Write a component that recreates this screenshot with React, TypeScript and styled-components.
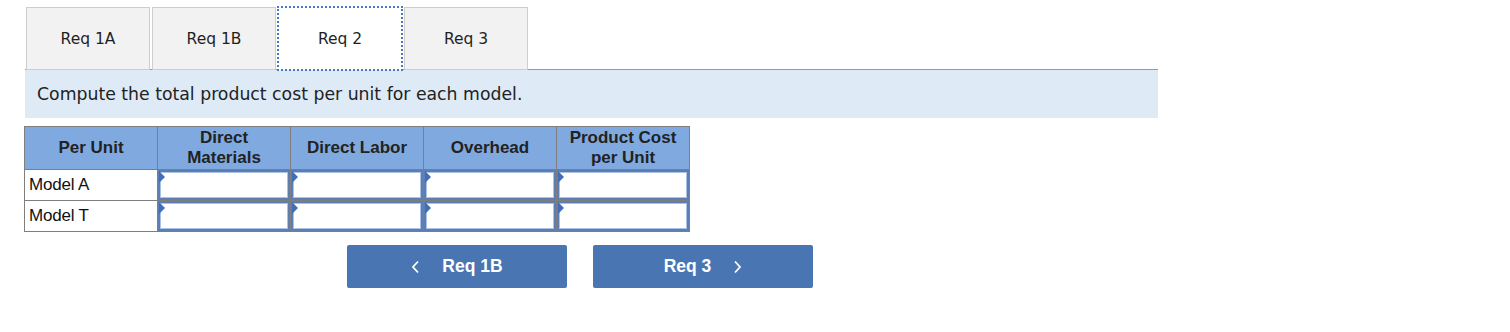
import React from "react";
import styled, { createGlobalStyle } from "styled-components";

const Global = createGlobalStyle`
  html, body { margin: 0; padding: 0; background: #fff; }
  body { font-family: "DejaVu Sans", Verdana, sans-serif; color: #222; }
`;

const Page = styled.div`
  padding: 7px 0 0 25px;
  width: 1133px;
`;

const TabRow = styled.div`
  display: flex;
  gap: 2px;
  padding-left: 1px;
  position: relative;
  z-index: 1;
  margin-bottom: -1px;
`;

const Tab = styled.div<{ $active?: boolean }>`
  box-sizing: border-box;
  width: 124px;
  height: 63px;
  display: flex;
  align-items: center;
  justify-content: center;
  font-size: 15.5px;
  color: #1f1f1f;
  background: ${(p) => (p.$active ? "#fff" : "#f2f2f2")};
  border: 1px solid ${(p) => (p.$active ? "transparent" : "#cdcdcd")};
  border-bottom: ${(p) => (p.$active ? "1px solid #fff" : "1px solid #cdcdcd")};
  outline: ${(p) => (p.$active ? "2px dotted #4a78c0" : "none")};
  outline-offset: -1px;
`;

const Prompt = styled.div`
  box-sizing: border-box;
  height: 49px;
  background: #deeaf6;
  border-top: 1px solid #9a9a9a;
  display: flex;
  align-items: center;
  padding-left: 12px;
  font-size: 17.3px;
  color: #222;
`;

const Table = styled.table`
  margin-top: 8px;
  margin-left: -1px;
  width: 666px;
  table-layout: fixed;
  border-collapse: collapse;
  font-family: "Liberation Sans", Arial, sans-serif;
`;

const Th = styled.th`
  height: 43px;
  box-sizing: border-box;
  background: #80aadf;
  border: 1px solid #7e7e7e;
  font-size: 17px;
  font-weight: bold;
  color: #222;
  line-height: 20px;
  padding: 0 4px;
  text-align: center;
`;

const Label = styled.td`
  height: 31px;
  box-sizing: border-box;
  border: 1px solid #7e7e7e;
  font-size: 17px;
  color: #111;
  padding: 0 0 0 4px;
  text-align: left;
  letter-spacing: -0.2px;
`;

const InputCell = styled.td`
  height: 31px;
  box-sizing: border-box;
  border: 1px solid #7e7e7e;
  padding: 0;
  background: #fff;
`;

const InputBox = styled.div`
  position: relative;
  box-sizing: border-box;
  height: 30px;
  border: 2px solid #5c7eb3;
  box-shadow: inset 0 0 0 1px #a9c2e6;
  background: #fff;
`;

const Marker = styled.div`
  position: absolute;
  left: -1px;
  top: -1px;
  width: 0;
  height: 0;
  border-top: 6px solid transparent;
  border-bottom: 6px solid transparent;
  border-left: 6px solid #3f6fb8;
`;

const ButtonRow = styled.div`
  display: flex;
  gap: 26px;
  margin-top: 13px;
  margin-left: 322px;
`;

const NavButton = styled.button`
  box-sizing: border-box;
  width: 220px;
  height: 43px;
  border: none;
  border-radius: 2px;
  background: #4a75b3;
  color: #fff;
  font-family: "Liberation Sans", Arial, sans-serif;
  font-weight: bold;
  font-size: 17.5px;
  display: flex;
  align-items: center;
  justify-content: center;
  gap: 22px;
  padding: 0;
  cursor: pointer;
`;

const Chevron = ({ dir }: { dir: "left" | "right" }) => (
  <svg width="9" height="14" viewBox="0 0 9 14" fill="none">
    <path
      d={dir === "left" ? "M7 1.5L2 7l5 5.5" : "M2 1.5L7 7l-5 5.5"}
      stroke="#fff"
      strokeWidth="1.8"
    />
  </svg>
);

const headers = ["Per Unit", "Direct Materials", "Direct Labor", "Overhead", "Product Cost per Unit"];
const rows = ["Model A", "Model T"];

export default function App() {
  return (
    <>
      <Global />
      <Page>
        <TabRow>
          <Tab>Req 1A</Tab>
          <Tab>Req 1B</Tab>
          <Tab $active>Req 2</Tab>
          <Tab>Req 3</Tab>
        </TabRow>
        <Prompt>Compute the total product cost per unit for each model.</Prompt>
        <Table>
          <thead>
            <tr>
              {headers.map((h) => (
                <Th key={h}>{h}</Th>
              ))}
            </tr>
          </thead>
          <tbody>
            {rows.map((r) => (
              <tr key={r}>
                <Label>{r}</Label>
                {[0, 1, 2, 3].map((i) => (
                  <InputCell key={i}>
                    <InputBox>
                      <Marker />
                    </InputBox>
                  </InputCell>
                ))}
              </tr>
            ))}
          </tbody>
        </Table>
        <ButtonRow>
          <NavButton>
            <Chevron dir="left" />
            <span>Req 1B</span>
          </NavButton>
          <NavButton>
            <span>Req 3</span>
            <Chevron dir="right" />
          </NavButton>
        </ButtonRow>
      </Page>
    </>
  );
}
